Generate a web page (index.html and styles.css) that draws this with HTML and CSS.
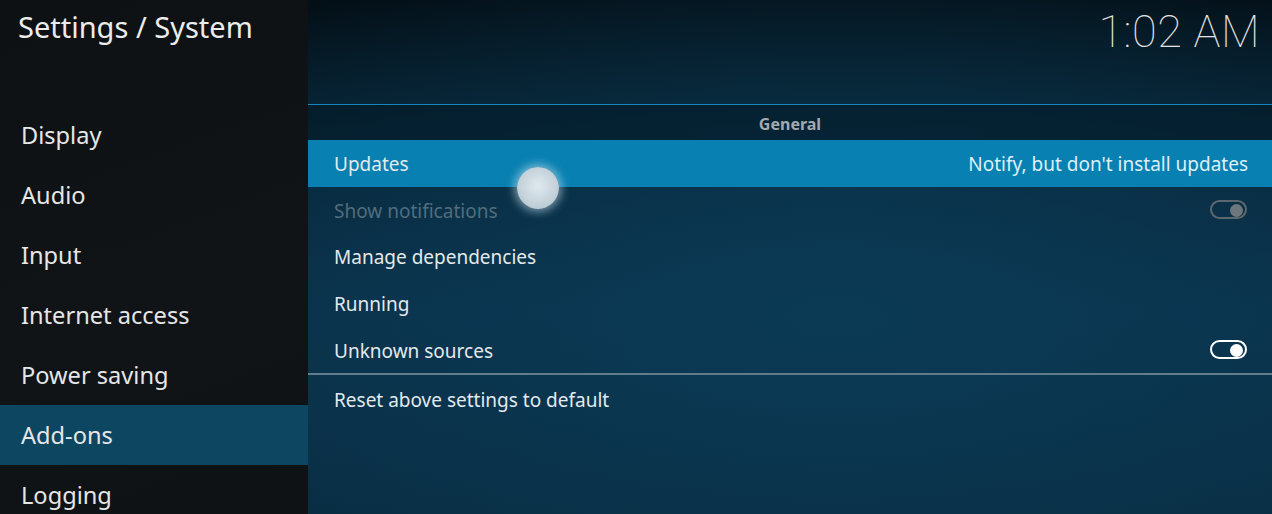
FILE: index.html
```html
<!DOCTYPE html>
<html lang="en">
<head>
    <meta charset="UTF-8">
    <title>Settings / System</title>
    <link rel="stylesheet" href="styles.css">
</head>
<body>

    <div class="screen">
        <div class="sidebar">
            <h1 class="title">Settings / System</h1>
            <ul class="menu">
                <li>Display</li>
                <li>Audio</li>
                <li>Input</li>
                <li>Internet access</li>
                <li>Power saving</li>
                <li class="active">Add-ons</li>
                <li>Logging</li>
            </ul>
        </div>

        <div class="main">
            <div class="header">
                <div class="clock">1:02 AM</div>
            </div>
            <div class="group-title">General</div>
            <div class="setting focused">
                <span>Updates</span>
                <span class="value">Notify, but don't install updates</span>
            </div>
            <div class="setting disabled">
                <span>Show notifications</span>
                <span class="toggle on"></span>
            </div>
            <div class="setting">
                <span>Manage dependencies</span>
            </div>
            <div class="setting">
                <span>Running</span>
            </div>
            <div class="setting">
                <span>Unknown sources</span>
                <span class="toggle on"></span>
            </div>
            <div class="divider"></div>
            <div class="setting reset">
                <span>Reset above settings to default</span>
            </div>

            <!-- pointer -->
            <div class="pointer"></div>
        </div>
    </div>

</body>
</html>
```

FILE: styles.css
```css
html, body {
    margin: 0;
    padding: 0;
}
body {
    width: 1272px;
    height: 514px;
    overflow: hidden;
    font-family: "Noto Sans", "Open Sans", sans-serif;
    background-color: #0f1214;
    color: #e8e8e8;
}
.screen {
    display: flex;
    height: 514px;
}

/* left column */
.sidebar {
    width: 308px;
    flex-shrink: 0;
    background: linear-gradient(160deg, #0e1113 0%, #101417 60%, #0e1215 100%);
}
.title {
    margin: 0;
    height: 105px;
    padding-left: 18px;
    font-size: 29px;
    font-weight: normal;
    line-height: 54px;
    color: #ececec;
}
.menu {
    list-style: none;
    margin: 0;
    padding: 0;
}
.menu li {
    height: 60px;
    line-height: 60px;
    padding-left: 21px;
    font-size: 23.6px;
    color: #e6e6e6;
}
.menu li.active {
    background-color: #0c4660;
}

/* right column */
.main {
    position: relative;
    flex: 1;
    background:
        radial-gradient(ellipse 900px 420px at 55% 62%, #0b3a55 0%, rgba(11, 58, 85, 0) 100%),
        linear-gradient(180deg, #030c12 0%, #06202f 25%, #0a3049 60%, #082a3e 100%);
}
.header {
    height: 104px;
    border-bottom: 1px solid #1786bd;
    display: flex;
    justify-content: flex-end;
}
.clock {
    font-family: Roboto, sans-serif;
    font-weight: 100;
    font-size: 45px;
    line-height: 64px;
    padding-right: 12px;
    color: #e4e4e4;
    letter-spacing: 0.5px;
}
.group-title {
    height: 35px;
    line-height: 38px;
    text-align: center;
    font-size: 16px;
    font-weight: bold;
    color: #a2aab0;
    background-color: rgba(2, 22, 34, 0.45);
}
.setting {
    box-sizing: border-box;
    height: 46.6px;
    padding: 2px 24px 0 26px;
    display: flex;
    align-items: center;
    justify-content: space-between;
    font-size: 19px;
    color: #e4e9ec;
}
.setting.focused {
    background-color: #0880b1;
}
.setting .value {
    color: #dcf0f8;
}
.setting.disabled {
    color: #516d7d;
}
.setting.reset {
    height: 48px;
}
.divider {
    height: 2px;
    background-color: #5f7d8d;
}

.toggle {
    position: relative;
    width: 33px;
    height: 15px;
    border: 2.5px solid #ffffff;
    border-radius: 11px;
    margin: 0 1px 2px 0;
}
.toggle::after {
    content: "";
    position: absolute;
    top: 1.5px;
    right: 2px;
    width: 13px;
    height: 13px;
    border-radius: 50%;
    background-color: #ffffff;
}
.disabled .toggle {
    border-color: #5c676e;
}
.disabled .toggle::after {
    background-color: #6e777d;
}

.pointer {
    position: absolute;
    left: 209px;
    top: 167px;
    width: 42px;
    height: 42px;
    border-radius: 50%;
    background: radial-gradient(circle at 50% 45%, #dfe8ee 0%, #c6d3db 55%, #a9bcc7 100%);
    box-shadow: 0 0 8px 3px rgba(200, 225, 240, 0.55);
}
```
